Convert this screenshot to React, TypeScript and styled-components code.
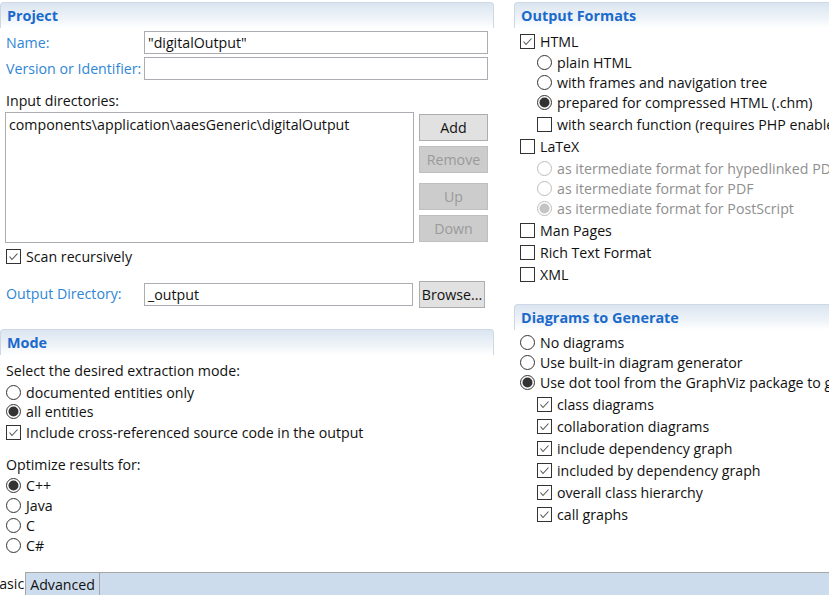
import React from "react";
import styled, { createGlobalStyle } from "styled-components";

const Global = createGlobalStyle`
  html, body { margin: 0; padding: 0; background: #fff; }
  body { font-family: "Open Sans", "Noto Sans", "Liberation Sans", sans-serif; font-size: 14.2px; color: #111; }
  * { box-sizing: border-box; }
`;

const Page = styled.div`
  width: 829px;
  height: 595px;
  display: flex;
  flex-direction: column;
  overflow: hidden;
  background: #fff;
`;

const Main = styled.div`
  flex: 1;
  display: flex;
  padding-top: 2px;
  min-height: 0;
`;

const LeftCol = styled.div`
  width: 494px;
  flex-shrink: 0;
  display: flex;
  flex-direction: column;
`;

const RightCol = styled.div`
  flex: 1;
  margin-left: 20px;
  display: flex;
  flex-direction: column;
  white-space: nowrap;
  overflow: hidden;
  min-width: 0;
`;

const SectionHeader = styled.div<{ $open?: boolean; $mt?: number }>`
  height: 26px;
  flex-shrink: 0;
  margin-top: ${(p) => p.$mt ?? 0}px;
  display: flex;
  align-items: center;
  padding-left: 6px;
  border: 1px solid #ccd8e5;
  border-bottom: none;
  border-radius: 4px 4px 0 0;
  ${(p) => (p.$open ? "border-right: none; border-top-right-radius: 0;" : "")}
  background: linear-gradient(#dbe5f0 0%, #eef3f8 60%, #ffffff 100%);
  color: #1a6acb;
  font-weight: 700;
  font-size: 14.4px;
`;

const FieldGrid = styled.div`
  display: grid;
  grid-template-columns: 138px 1fr;
  row-gap: 3px;
  padding: 3px 6px 0 6px;
  align-items: center;
`;

const FieldLabel = styled.div<{ $w?: number }>`
  color: #2f86d6;
  line-height: 20px;
  white-space: nowrap;
  ${(p) => (p.$w ? `width: ${p.$w}px; flex-shrink: 0;` : "")}
`;

const TextBox = styled.div<{ $h?: number; $w?: number }>`
  height: ${(p) => p.$h ?? 23}px;
  ${(p) => (p.$w ? `width: ${p.$w}px; flex-shrink: 0;` : "")}
  border: 1px solid #abadb3;
  background: #fff;
  padding: 0 3px;
  line-height: ${(p) => (p.$h ?? 23) - 2}px;
  white-space: nowrap;
  overflow: hidden;
`;

const Caption = styled.div<{ $mt?: number }>`
  line-height: 20px;
  padding-left: 6px;
  margin-top: ${(p) => p.$mt ?? 0}px;
  white-space: nowrap;
`;

const DirArea = styled.div`
  display: flex;
  gap: 5px;
  padding: 1px 6px 0 5px;
`;

const ListBox = styled.div`
  width: 409px;
  height: 131px;
  border: 1px solid #abadb3;
  padding: 2px 3px;
  line-height: 20px;
  white-space: nowrap;
  overflow: hidden;
`;

const ButtonCol = styled.div`
  flex: 1;
  display: flex;
  flex-direction: column;
  padding-top: 2px;
`;

const Btn = styled.div<{ $disabled?: boolean; $mt?: number; $w?: number }>`
  height: 27px;
  ${(p) => (p.$w ? `width: ${p.$w}px; flex-shrink: 0;` : "")}
  margin-top: ${(p) => p.$mt ?? 0}px;
  display: flex;
  align-items: center;
  justify-content: center;
  border: 1px solid ${(p) => (p.$disabled ? "#bfbfbf" : "#adadad")};
  background: ${(p) => (p.$disabled ? "#cccccc" : "#e1e1e1")};
  color: ${(p) => (p.$disabled ? "#9a9a9a" : "#111")};
  white-space: nowrap;
`;

const OutDirRow = styled.div`
  display: flex;
  align-items: center;
  gap: 6px;
  padding-left: 6px;
  margin-top: 13px;
  height: 28px;
`;

const Option = styled.div<{ $indent?: number; $h?: number; $mt?: number; $disabled?: boolean }>`
  display: flex;
  flex-shrink: 0;
  align-items: center;
  height: ${(p) => p.$h ?? 20}px;
  margin-top: ${(p) => p.$mt ?? 0}px;
  padding-left: ${(p) => p.$indent ?? 6}px;
  gap: 5px;
  color: ${(p) => (p.$disabled ? "#8f8f8f" : "#111")};
  white-space: nowrap;
`;

const BoxMark = styled.svg`
  flex-shrink: 0;
  display: block;
`;

const Check = ({ on }: { on?: boolean }) => (
  <BoxMark width="15" height="15" viewBox="0 0 15 15">
    <rect x="0.5" y="0.5" width="14" height="14" fill="#fff" stroke="#333" />
    {on && <polyline points="3.5,7.5 6,10.5 11.5,4.5" fill="none" stroke="#555" strokeWidth="1.1" />}
  </BoxMark>
);

const Radio = ({ on, disabled }: { on?: boolean; disabled?: boolean }) => {
  const c = disabled ? "#bcbcbc" : "#333";
  return (
    <BoxMark width="15" height="15" viewBox="0 0 15 15">
      <circle cx="7.5" cy="7.5" r="7" fill="#fff" stroke={c} />
      {on && <circle cx="7.5" cy="7.5" r="5" fill={disabled ? "#c4c4c4" : "#333"} />}
    </BoxMark>
  );
};

type Item = { kind: "c" | "r"; label: string; on?: boolean; indent: number; disabled?: boolean; mt?: number };

const Items = ({ items }: { items: Item[] }) => (
  <>
    {items.map((it, i) => (
      <Option key={i} $indent={it.indent} $h={it.kind === "c" ? 22 : 20} $mt={it.mt} $disabled={it.disabled}>
        {it.kind === "c" ? <Check on={it.on} /> : <Radio on={it.on} disabled={it.disabled} />}
        <span>{it.label}</span>
      </Option>
    ))}
  </>
);

const TabBar = styled.div`
  height: 23px;
  flex-shrink: 0;
  display: flex;
  background: #cddcec;
  border-top: 1px solid #a6a6a6;
`;

const Tab = styled.div<{ $active?: boolean; $ml?: number }>`
  display: flex;
  align-items: center;
  padding: 0 ${(p) => (p.$active ? "1px 0 4px" : "4px")};
  margin-left: ${(p) => p.$ml ?? 0}px;
  margin-top: ${(p) => (p.$active ? -1 : 0)}px;
  background: ${(p) => (p.$active ? "#fff" : "#cddcec")};
  border-right: 1px solid #a6a6a6;
  white-space: nowrap;
`;

export default function App() {
  const formats: Item[] = [
    { kind: "c", label: "HTML", on: true, indent: 6 },
    { kind: "r", label: "plain HTML", indent: 23 },
    { kind: "r", label: "with frames and navigation tree", indent: 23 },
    { kind: "r", label: "prepared for compressed HTML (.chm)", on: true, indent: 23 },
    { kind: "c", label: "with search function (requires PHP enabled web server)", indent: 23, mt: 1 },
    { kind: "c", label: "LaTeX", indent: 6 },
    { kind: "r", label: "as itermediate format for hypedlinked PDF", indent: 23, disabled: true, mt: 1 },
    { kind: "r", label: "as itermediate format for PDF", indent: 23, disabled: true },
    { kind: "r", label: "as itermediate format for PostScript", on: true, indent: 23, disabled: true },
    { kind: "c", label: "Man Pages", indent: 6, mt: 1 },
    { kind: "c", label: "Rich Text Format", indent: 6 },
    { kind: "c", label: "XML", indent: 6 },
  ];
  const diagrams: Item[] = [
    { kind: "r", label: "No diagrams", indent: 6 },
    { kind: "r", label: "Use built-in diagram generator", indent: 6 },
    { kind: "r", label: "Use dot tool from the GraphViz package to generate", on: true, indent: 6 },
    { kind: "c", label: "class diagrams", on: true, indent: 23, mt: 1 },
    { kind: "c", label: "collaboration diagrams", on: true, indent: 23 },
    { kind: "c", label: "include dependency graph", on: true, indent: 23 },
    { kind: "c", label: "included by dependency graph", on: true, indent: 23 },
    { kind: "c", label: "overall class hierarchy", on: true, indent: 23 },
    { kind: "c", label: "call graphs", on: true, indent: 23 },
  ];
  return (
    <>
      <Global />
      <Page>
        <Main>
          <LeftCol>
            <SectionHeader>Project</SectionHeader>
            <FieldGrid>
              <FieldLabel>Name:</FieldLabel>
              <TextBox>"digitalOutput"</TextBox>
              <FieldLabel>Version or Identifier:</FieldLabel>
              <TextBox />
            </FieldGrid>
            <Caption $mt={11}>Input directories:</Caption>
            <DirArea>
              <ListBox>components\application\aaesGeneric\digitalOutput</ListBox>
              <ButtonCol>
                <Btn>Add</Btn>
                <Btn $disabled $mt={5}>Remove</Btn>
                <Btn $disabled $mt={10}>Up</Btn>
                <Btn $disabled $mt={5}>Down</Btn>
              </ButtonCol>
            </DirArea>
            <Option $h={22} $mt={2}>
              <Check on />
              <span>Scan recursively</span>
            </Option>
            <OutDirRow>
              <FieldLabel $w={132}>Output Directory:</FieldLabel>
              <TextBox $w={269}>_output</TextBox>
              <Btn $w={66}>Browse...</Btn>
            </OutDirRow>
            <SectionHeader $mt={21}>Mode</SectionHeader>
            <Caption $mt={6}>Select the desired extraction mode:</Caption>
            <Items
              items={[
                { kind: "r", label: "documented entities only", indent: 6, mt: 1 },
                { kind: "r", label: "all entities", on: true, indent: 6, mt: -1 },
                { kind: "c", label: "Include cross-referenced source code in the output", on: true, indent: 6 },
              ]}
            />
            <Caption $mt={12}>Optimize results for:</Caption>
            <Items
              items={[
                { kind: "r", label: "C++", on: true, indent: 6, mt: 0 },
                { kind: "r", label: "Java", indent: 6 },
                { kind: "r", label: "C", indent: 6 },
                { kind: "r", label: "C#", indent: 6 },
              ]}
            />
          </LeftCol>
          <RightCol>
            <SectionHeader $open>Output Formats</SectionHeader>
            <Option $h={2} />
            <Items items={formats} />
            <SectionHeader $open $mt={19}>Diagrams to Generate</SectionHeader>
            <Option $h={2} />
            <Items items={diagrams} />
          </RightCol>
        </Main>
        <TabBar>
          <Tab $active $ml={-14}>Basic</Tab>
          <Tab>Advanced</Tab>
        </TabBar>
      </Page>
    </>
  );
}
